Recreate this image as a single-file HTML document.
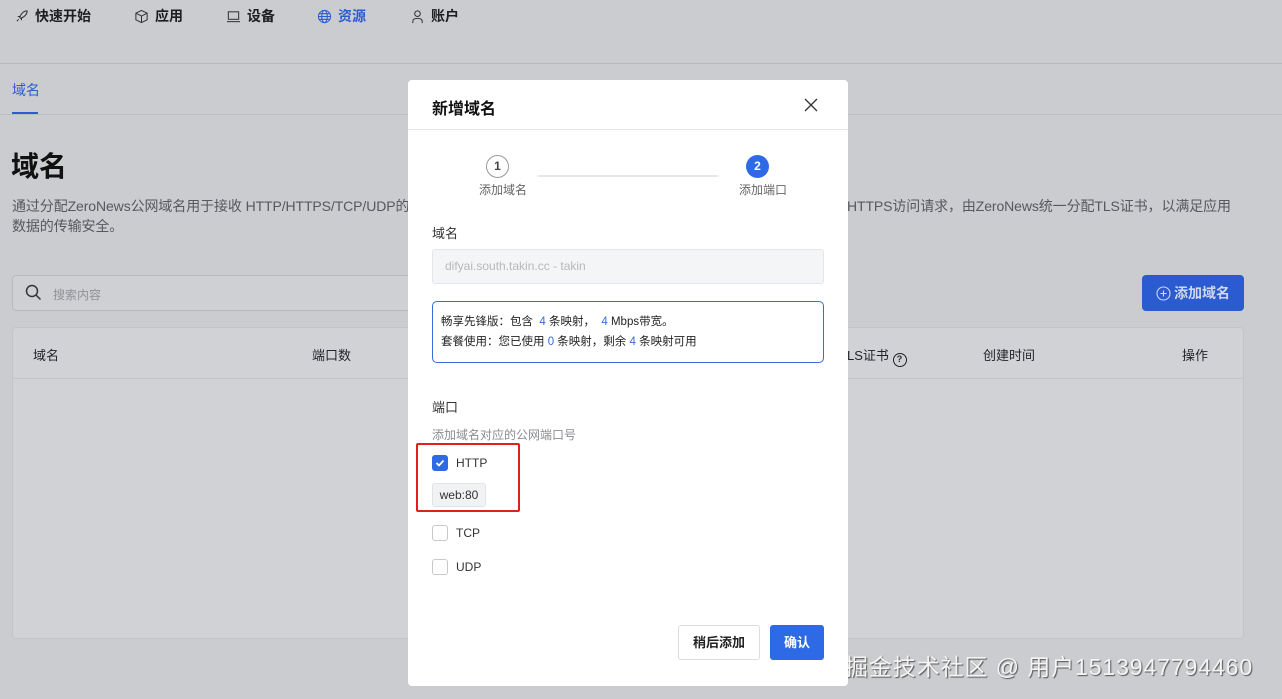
<!DOCTYPE html>
<html><head><meta charset="utf-8"><style>
*{box-sizing:border-box;margin:0;padding:0}
body{width:1282px;height:699px;overflow:hidden;background:#cbcccf;font-family:"Liberation Sans","Noto Sans CJK SC",sans-serif;color:#1f2329;position:relative}
.a{position:absolute}
.nav{font-size:14px;font-weight:bold;top:6px;display:flex;align-items:center;gap:6px;color:#1c1e22}
.nav svg{width:15px;height:15px}
.muted{color:#55585e}
.cb{width:16px;height:16px;border:1px solid #c7c9cc;border-radius:3px;background:#fff}
</style></head><body>
<div class="a nav" style="left:14px"><svg viewBox="0 0 16 16" fill="none" stroke="#333" stroke-width="1.1"><path d="M5 11 L3 13 M6 9c2-5 5-7 8-7c0 3-2 6-7 8z M4 8l3 0 M8 12l0-3"/></svg>快速开始</div>
<div class="a nav" style="left:134px"><svg viewBox="0 0 16 16" fill="none" stroke="#333" stroke-width="1.1"><path d="M8 1.5l6 3v7l-6 3-6-3v-7z M2 4.5l6 3 6-3 M8 7.5v7"/></svg>应用</div>
<div class="a nav" style="left:226px"><svg viewBox="0 0 16 16" fill="none" stroke="#333" stroke-width="1.1"><rect x="2.5" y="3" width="11" height="8"/><path d="M1 13.5h14"/></svg>设备</div>
<div class="a nav" style="left:317px;color:#2d5bd1"><svg viewBox="0 0 16 16" fill="none" stroke="#2d5bd1" stroke-width="1.1"><circle cx="8" cy="8" r="6.5"/><ellipse cx="8" cy="8" rx="3" ry="6.5"/><path d="M1.5 8h13 M2.5 5h11 M2.5 11h11"/></svg>资源</div>
<div class="a nav" style="left:410px"><svg viewBox="0 0 16 16" fill="none" stroke="#333" stroke-width="1.1"><circle cx="8" cy="5" r="3"/><path d="M3 15v-2c0-2 2-3 5-3s5 1 5 3v2"/></svg>账户</div>
<div class="a" style="left:0;top:63px;width:1282px;height:1px;background:#b9babd"></div>
<div class="a" style="left:12px;top:80px;font-size:14px;color:#2d5bd1">域名</div>
<div class="a" style="left:12px;top:112px;width:26px;height:2px;background:#2d5bd1"></div>
<div class="a" style="left:0;top:114px;width:1282px;height:1px;background:#bcbdc0"></div>
<div class="a" style="left:11px;top:145px;font-size:28px;font-weight:bold;color:#111">域名</div>
<div class="a muted" style="left:12px;top:196px;font-size:14px;line-height:20px;letter-spacing:-0.1px">通过分配ZeroNews公网域名用于接收 HTTP/HTTPS/TCP/UDP的<br>数据的传输安全。</div>
<div class="a muted" style="left:847px;top:196px;font-size:14px;line-height:20px;letter-spacing:-0.1px">HTTPS访问请求，由ZeroNews统一分配TLS证书，以满足应用</div>
<div class="a" style="left:12px;top:275px;width:410px;height:36px;border:1px solid #b8b9bc;border-radius:4px;background:#cfd0d3"></div>
<svg class="a" style="left:25px;top:284px" width="17" height="17" viewBox="0 0 17 17" fill="none" stroke="#333" stroke-width="1.5"><circle cx="7" cy="7" r="5.5"/><path d="M11 11l4.5 4.5"/></svg>
<div class="a" style="left:53px;top:286px;font-size:12px;color:#909297">搜索内容</div>
<div class="a" style="left:1142px;top:275px;width:102px;height:36px;background:#2b5bd0;border-radius:4px;color:#d0d8ee;font-size:14px;font-weight:bold;display:flex;align-items:center;justify-content:center;gap:3px"><svg width="15" height="15" viewBox="0 0 15 15" fill="none" stroke="#d0d8ee" stroke-width="1.1"><circle cx="7.5" cy="7.5" r="6.5"/><path d="M7.5 4.5v6M4.5 7.5h6"/></svg>添加域名</div>
<div class="a" style="left:12px;top:327px;width:1232px;height:312px;border:1px solid #c3c4c7;border-radius:4px;background:#d1d2d5"></div>
<div class="a" style="left:12px;top:378px;width:1232px;height:1px;background:#c3c4c7"></div>
<div class="a" style="left:33px;top:345px;font-size:13px">域名</div>
<div class="a" style="left:312px;top:345px;font-size:13px">端口数</div>
<div class="a" style="left:847px;top:345px;font-size:13px">LS证书 <span style="display:inline-block;width:14px;height:14px;border:1.5px solid #222;border-radius:50%;font-size:9px;text-align:center;line-height:11px;font-weight:bold;vertical-align:-2px">?</span></div>
<div class="a" style="left:983px;top:345px;font-size:13px">创建时间</div>
<div class="a" style="left:1182px;top:345px;font-size:13px">操作</div>
<div class="a" style="left:845px;top:648px;font-size:23px;letter-spacing:0.9px;color:#f4f4f4;text-shadow:1px 1px 1px #555">掘金技术社区 @ 用户1513947794460</div>

<div class="a" style="left:408px;top:80px;width:440px;height:606px;background:#fff;border-radius:4px">
<div class="a" style="left:24px;top:15px;font-size:16px;font-weight:bold;color:#111">新增域名</div>
<svg class="a" style="left:396px;top:18px" width="14" height="14" viewBox="0 0 14 14" stroke="#333" stroke-width="1.3"><path d="M1 1l12 12M13 1L1 13"/></svg>
<div class="a" style="left:0;top:49px;width:440px;height:1px;background:#e6e7e9"></div>
<div class="a" style="left:78px;top:75px;width:23px;height:23px;border:1px solid #999;border-radius:50%;font-size:12px;font-weight:bold;text-align:center;line-height:21px;color:#444">1</div>
<div class="a" style="left:130px;top:95px;width:180px;height:2px;background:#e5e6e8"></div>
<div class="a" style="left:338px;top:75px;width:23px;height:23px;background:#2f6ae6;border-radius:50%;font-size:12px;font-weight:bold;text-align:center;line-height:23px;color:#fff">2</div>
<div class="a" style="left:71px;top:101px;font-size:12px;color:#666">添加域名</div>
<div class="a" style="left:331px;top:101px;font-size:12px;color:#666">添加端口</div>
<div class="a" style="left:24px;top:143px;font-size:13px;color:#333">域名</div>
<div class="a" style="left:24px;top:169px;width:392px;height:35px;background:#f4f5f6;border:1px solid #e6e7e9;border-radius:3px;font-size:12px;color:#b6b8bb;padding:9px 12px">difyai.south.takin.cc - takin</div>
<div class="a" style="left:24px;top:221px;width:392px;height:62px;border:1px solid #3a6ad8;border-radius:5px;font-size:11.5px;line-height:20px;padding:10px 8px;color:#222">畅享先锋版：包含 <span style="color:#3a6ad8">&nbsp;4</span> 条映射，&nbsp;<span style="color:#3a6ad8">&nbsp;4</span> Mbps带宽。<br>套餐使用：您已使用 <span style="color:#3a6ad8">0</span> 条映射，剩余 <span style="color:#3a6ad8">4</span> 条映射可用</div>
<div class="a" style="left:24px;top:317px;font-size:13px;color:#333">端口</div>
<div class="a" style="left:24px;top:346px;font-size:12px;color:#8a8c90">添加域名对应的公网端口号</div>
<div class="a" style="left:8px;top:363px;width:104px;height:69px;border:2px solid #e0201a;border-radius:2px"></div>
<div class="a cb" style="left:24px;top:375px;background:#2f6ae6;border-color:#2f6ae6"><svg width="14" height="14" viewBox="0 0 14 14" fill="none" stroke="#fff" stroke-width="1.8"><path d="M3.5 7l2.5 2.5 4.5-5"/></svg></div>
<div class="a" style="left:48px;top:376px;font-size:12px;color:#333">HTTP</div>
<div class="a" style="left:24px;top:403px;width:54px;height:24px;background:#f1f2f3;border:1px solid #e2e3e5;border-radius:3px;font-size:12px;color:#333;text-align:center;line-height:22px">web:80</div>
<div class="a cb" style="left:24px;top:445px"></div>
<div class="a" style="left:48px;top:446px;font-size:12px;color:#333">TCP</div>
<div class="a cb" style="left:24px;top:479px"></div>
<div class="a" style="left:48px;top:480px;font-size:12px;color:#333">UDP</div>
<div class="a" style="left:270px;top:545px;width:82px;height:35px;border:1px solid #dcdde0;border-radius:3px;font-size:13px;font-weight:bold;text-align:center;line-height:33px;color:#222">稍后添加</div>
<div class="a" style="left:362px;top:545px;width:54px;height:35px;background:#2f6ae6;border-radius:3px;font-size:13px;font-weight:bold;text-align:center;line-height:35px;color:#fff">确认</div>
</div>
</body></html>
